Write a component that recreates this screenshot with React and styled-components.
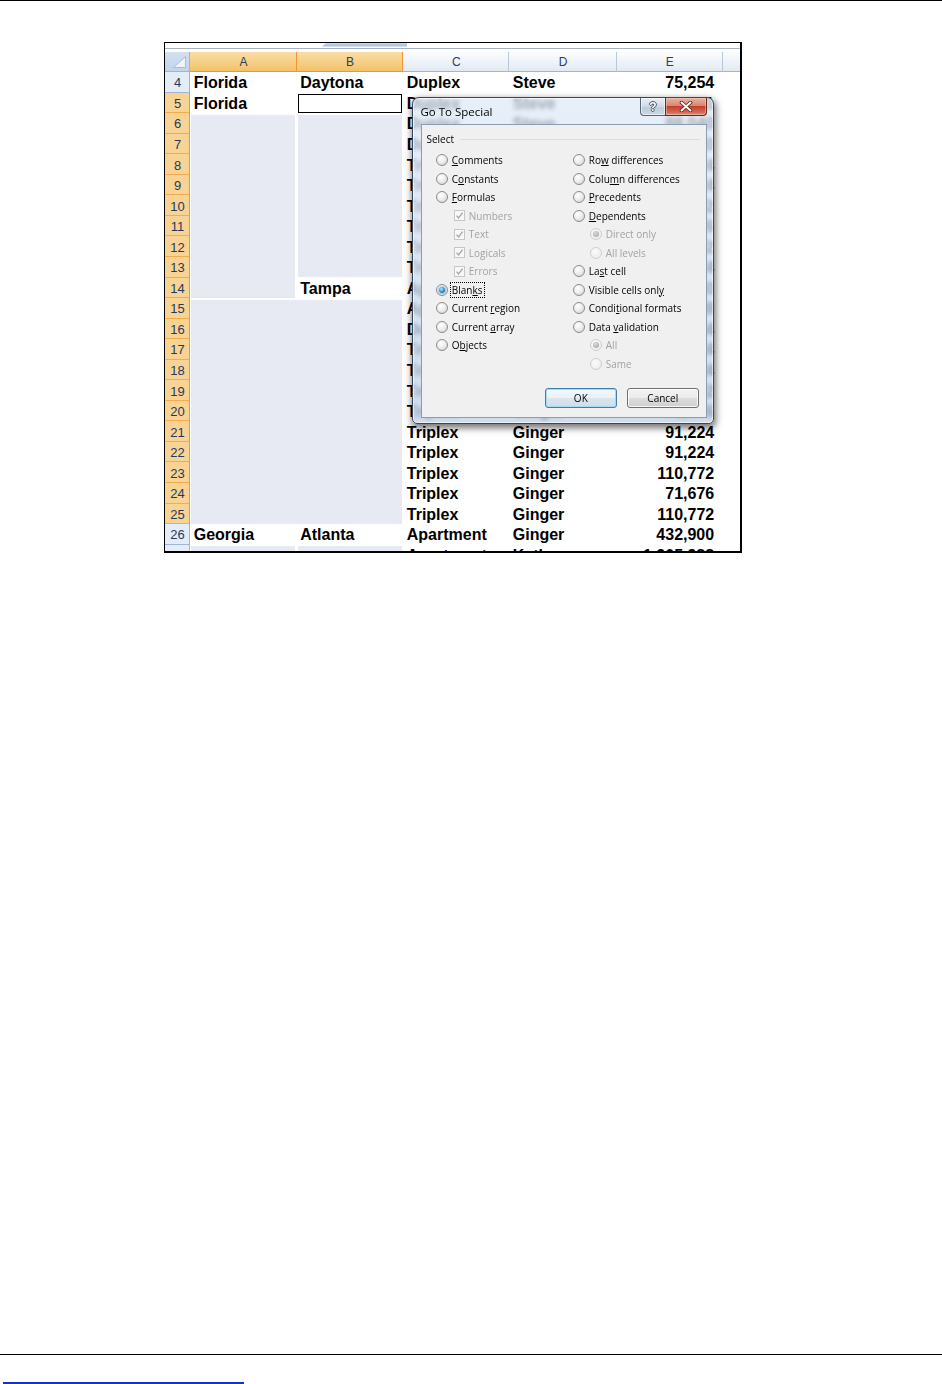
import React from 'react';
import styled, { createGlobalStyle } from 'styled-components';

const GlobalStyle = createGlobalStyle`
  html, body { margin: 0; padding: 0; background: #fff; }
  body { overflow: hidden; font-family: "Liberation Sans", Arial, sans-serif; }
`;

const Page = styled.div`
  height: 1384px;
  display: flex;
  flex-direction: column;
`;

const TopRule = styled.div`
  height: 1px;
  background: #000;
`;

const Figure = styled.div`
  margin: 41px 0 0 164px;
`;

const Sheet = styled.div`
  position: relative;
  width: 575.2px;
  height: 508px;
  border: 2px solid #000;
  border-top-width: 1px;
  border-left-width: 1.5px;
  overflow: hidden;
  background: #fff;
`;

const Strip = styled.div`
  height: 5px;
  border-bottom: 1px solid #a9b3bf;
  margin-bottom: 2.8px;
  padding-left: 157px;
`;

const StripTab = styled.div`
  width: 85px;
  height: 3.5px;
  background: linear-gradient(#c9d9ec, #9fb9d8);
  clip-path: polygon(4px 0, 100% 0, 100% 100%, 0 100%);
`;

const Grid = styled.div`
  display: grid;
  grid-template-columns: 25.2px 106.5px 106.6px 106px 107.4px 106px 18px;
  grid-template-rows: 20.3px repeat(24, 20.55px);
`;

const Corner = styled.div`
  grid-row: 1;
  grid-column: 1;
  background: linear-gradient(#d3e0f0, #c2d4ea);
  border-right: 1px solid #9eb6ce;
  border-bottom: 1px solid #9eb6ce;
  display: flex;
  align-items: flex-end;
  justify-content: flex-end;
  padding: 0 3px 3px 0;
  box-sizing: border-box;
`;

const ColHead = styled.div`
  grid-row: 1;
  grid-column: ${p => p.$col};
  box-sizing: border-box;
  display: flex;
  align-items: center;
  justify-content: center;
  padding: 1px 0 0 1px;
  font-size: 12px;
  color: #27415f;
  background: ${p => p.$sel
    ? 'linear-gradient(#f9dca6, #f6cf85 55%, #f2c26a)'
    : 'linear-gradient(#fbfcfe, #eef3f9 55%, #e2e9f3)'};
  border-right: 1px solid ${p => p.$sel ? '#f29536' : '#b7c8dc'};
  border-bottom: 1px solid ${p => p.$sel ? '#f29536' : '#9eb6ce'};
`;

const RowHead = styled.div`
  grid-column: 1;
  grid-row: ${p => p.$row};
  box-sizing: border-box;
  display: flex;
  align-items: center;
  justify-content: center;
  padding: 2px 0 0 1px;
  font-size: 13px;
  color: #1f3a5f;
  background: ${p => p.$sel ? '#f9d394' : '#e4ecf7'};
  border-right: 1px solid ${p => p.$sel ? '#f29536' : '#9eb6ce'};
  border-bottom: 1px solid ${p => p.$sel ? '#f4ab50' : '#9eb6ce'};
`;

const Shade = styled.div`
  grid-row: ${p => p.$row};
  grid-column: ${p => p.$col};
  margin: 1.7px 1.7px 0.3px 1px;
  background: #e7eaf3;
`;

const ActiveCell = styled.div`
  grid-row: 3;
  grid-column: 3;
  margin: 1.2px 1px 0.3px 1px;
  border: 1px solid #000;
`;

const Cell = styled.div`
  grid-row: ${p => p.$row};
  grid-column: ${p => p.$col};
  display: flex;
  align-items: center;
  justify-content: ${p => (p.$num ? 'flex-end' : 'flex-start')};
  padding: ${p => (p.$num ? '2px 8.5px 0 0' : '2px 0 0 3.5px')};
  font: bold 16px "Liberation Sans", Arial, sans-serif;
  color: #000;
  white-space: nowrap;
  z-index: 1;
`;

/* dialog */
const Dialog = styled.div`
  position: absolute;
  left: 246.5px;
  top: 54px;
  width: 302px;
  z-index: 5;
  box-sizing: border-box;
  border: 1px solid #34475c;
  border-radius: 7px 7px 5px 5px;
  padding: 0 6px 5px 8px;
  background: linear-gradient(rgba(222, 233, 246, 0.72), rgba(190, 209, 231, 0.74));
  backdrop-filter: blur(2.2px);
  box-shadow: inset 0 0 0 1px rgba(255, 255, 255, 0.6), 1px 3px 7px 1px rgba(0, 0, 0, 0.55);
  font-family: "Open Sans", "Noto Sans", sans-serif;
`;

const TitleBar = styled.div`
  height: 26px;
  display: flex;
  justify-content: space-between;
  align-items: flex-start;
`;

const Title = styled.div`
  align-self: center;
  font-size: 11.5px;
  color: #000;
  padding-top: 1px;
`;

const TitleButtons = styled.div`
  display: flex;
  margin-right: -0.5px;
`;

const HelpButton = styled.div`
  width: 25px;
  height: 18px;
  box-sizing: border-box;
  border: 1px solid #56687d;
  border-top: none;
  border-right: none;
  border-radius: 0 0 0 4px;
  background: linear-gradient(#e9eff6, #cfdae6 50%, #bccbdb 51%, #cbd7e4);
  box-shadow: inset 0 0 0 1px rgba(255, 255, 255, 0.55);
  display: flex;
  align-items: center;
  justify-content: center;
  font: bold 12px "Liberation Sans", Arial, sans-serif;
  color: #fff;
  text-shadow: -1px 0 #4b5b6d, 1px 0 #4b5b6d, 0 -1px #4b5b6d, 0 1px #4b5b6d;
`;

const CloseButton = styled.div`
  width: 42px;
  height: 18px;
  box-sizing: border-box;
  border: 1px solid #6b261c;
  border-top: none;
  border-radius: 0 0 4px 0;
  background: linear-gradient(#eab0a2, #d98672 45%, #c4402c 50%, #d36c56 85%, #e0947e);
  box-shadow: inset 0 0 0 1px rgba(255, 210, 200, 0.45);
  display: flex;
  align-items: center;
  justify-content: center;
`;

const Body = styled.div`
  background: #f0f0f0;
  border: 1px solid #8b9db4;
  padding: 7px 6px 8.7px 5px;
`;

const SectionHead = styled.div`
  height: 14px;
  display: flex;
  align-items: center;
  gap: 6px;
  font-size: 10px;
  color: #000;
  &::after {
    content: '';
    flex: 1;
    height: 1px;
    background: #d5dfe5;
  }
`;

const Options = styled.div`
  display: grid;
  grid-template-columns: 137px 1fr;
  grid-template-rows: repeat(12, 18.5px);
  grid-auto-flow: column;
  margin: 4.75px 0 0 9.3px;
`;

const Option = styled.div`
  display: flex;
  align-items: center;
  gap: 4px;
  padding-left: ${p => p.$indent}px;
  font-size: 10px;
  color: ${p => (p.$disabled ? '#a2a2a2' : '#000')};
  white-space: nowrap;
`;

const Radio = styled.span`
  flex: none;
  width: 12px;
  height: 12px;
  box-sizing: border-box;
  border-radius: 50%;
  border: 1px solid ${p => (p.$disabled ? '#cfcfcf' : '#8c8c8c')};
  background: ${p => p.$disabled
    ? 'radial-gradient(circle at 40% 35%, #fbfbfb, #e9e9e9)'
    : 'radial-gradient(circle at 38% 32%, #ffffff 0%, #ececec 50%, #c9c9c9 100%)'};
  display: flex;
  align-items: center;
  justify-content: center;
  &::after {
    content: '';
    display: ${p => (p.$checked ? 'block' : 'none')};
    width: 6px;
    height: 6px;
    border-radius: 50%;
    background: ${p => p.$disabled
      ? 'radial-gradient(circle at 40% 35%, #dcdcdc, #9c9c9c)'
      : 'radial-gradient(circle at 40% 35%, #b5ecff 0%, #2f93dc 50%, #0c4e92 100%)'};
    box-shadow: ${p => (p.$disabled ? 'none' : '0 0 0 1px rgba(60, 140, 210, 0.35)')};
  }
`;

const Check = styled.span`
  flex: none;
  width: 11px;
  height: 11px;
  box-sizing: border-box;
  border: 1px solid #c6c6c6;
  background: #f8f8f8;
  display: flex;
  align-items: center;
  justify-content: center;
`;

const Key = styled.span`
  text-decoration: underline;
  text-underline-offset: 1px;
`;

const Focus = styled.span`
  outline: 1px dotted #000;
  outline-offset: 0;
  padding: 0 1px;
  margin-left: -1px;
`;

const ButtonRow = styled.div`
  display: flex;
  justify-content: flex-end;
  gap: 10px;
  margin: 15.25px 0.7px 0 0;
`;

const Button = styled.div`
  width: 72px;
  height: 20px;
  box-sizing: border-box;
  border: 1px solid ${p => (p.$default ? '#3c7fb1' : '#707070')};
  border-radius: 3px;
  background: ${p => p.$default
    ? 'linear-gradient(#f3f8fb, #eaf1f6 50%, #d9e6ee 51%, #cfdde7)'
    : 'linear-gradient(#f2f2f2, #ebebeb 50%, #dddddd 51%, #cfcfcf)'};
  box-shadow: inset 0 0 0 1px ${p => (p.$default ? '#a6d9f4' : 'rgba(255,255,255,0.8)')};
  display: flex;
  align-items: center;
  justify-content: center;
  font-size: 10px;
  color: #000;
`;

const Footer = styled.div`
  margin-top: auto;
`;

const FooterRule = styled.div`
  height: 1px;
  background: #000;
`;

const FooterLink = styled.div`
  margin: 27px 0 0 3px;
  width: 241px;
  height: 2px;
  background: #0a35c6;
`;

const data = [
  ['Florida', 'Daytona', 'Duplex', 'Steve', '75,254'],
  ['Florida', '', 'Duplex', 'Steve', '77,101'],
  ['', '', 'Duplex', 'Steve', '88,040'],
  ['', '', 'Duplex', 'Steve', '88,040'],
  ['', '', 'Triplex', 'Steve', '91,224'],
  ['', '', 'Triplex', 'Steve', '91,224'],
  ['', '', 'Triplex', 'Steve', '110,772'],
  ['', '', 'Triplex', 'Steve', '71,676'],
  ['', '', 'Triplex', 'Steve', '110,772'],
  ['', '', 'Triplex', 'Steve', '91,224'],
  ['', 'Tampa', 'Apartment', 'Steve', '432,900'],
  ['', '', 'Apartment', 'Steve', '1,205,988'],
  ['', '', 'Duplex', 'Ginger', '75,254'],
  ['', '', 'Triplex', 'Ginger', '91,224'],
  ['', '', 'Triplex', 'Ginger', '91,224'],
  ['', '', 'Triplex', 'Ginger', '110,772'],
  ['', '', 'Triplex', 'Ginger', '71,676'],
  ['', '', 'Triplex', 'Ginger', '91,224'],
  ['', '', 'Triplex', 'Ginger', '91,224'],
  ['', '', 'Triplex', 'Ginger', '110,772'],
  ['', '', 'Triplex', 'Ginger', '71,676'],
  ['', '', 'Triplex', 'Ginger', '110,772'],
  ['Georgia', 'Atlanta', 'Apartment', 'Ginger', '432,900'],
  ['', '', 'Apartment', 'Kathy', '1,205,988'],
];

const shades = [
  { row: '4 / 13', col: '2' },
  { row: '4 / 12', col: '3' },
  { row: '13 / 24', col: '2 / 4' },
  { row: '25', col: '2' },
  { row: '25', col: '3' },
];

const leftOptions = [
  { text: 'Comments', key: 0 },
  { text: 'Constants', key: 1 },
  { text: 'Formulas', key: 0 },
  { text: 'Numbers', check: true, sub: true },
  { text: 'Text', check: true, sub: true },
  { text: 'Logicals', check: true, sub: true },
  { text: 'Errors', check: true, sub: true },
  { text: 'Blanks', key: 4, checked: true, focus: true },
  { text: 'Current region', key: 8 },
  { text: 'Current array', key: 8 },
  { text: 'Objects', key: 1 },
  null,
];

const rightOptions = [
  { text: 'Row differences', key: 2 },
  { text: 'Column differences', key: 4 },
  { text: 'Precedents', key: 0 },
  { text: 'Dependents', key: 0 },
  { text: 'Direct only', sub: true, checked: true },
  { text: 'All levels', sub: true },
  { text: 'Last cell', key: 2 },
  { text: 'Visible cells only', key: 17 },
  { text: 'Conditional formats', key: 5 },
  { text: 'Data validation', key: 5 },
  { text: 'All', sub: true, checked: true },
  { text: 'Same', sub: true },
];

const Label = ({ text, k }) =>
  k == null ? text : (
    <>
      {text.slice(0, k)}
      <Key>{text[k]}</Key>
      {text.slice(k + 1)}
    </>
  );

const OptionItem = ({ opt }) => {
  if (!opt) return <div />;
  const label = <Label text={opt.text} k={opt.key} />;
  return (
    <Option $indent={opt.sub ? (opt.check ? 18 : 17) : 0} $disabled={opt.sub}>
      {opt.check ? (
        <Check>
          <svg width="9" height="9" viewBox="0 0 9 9">
            <path d="M1.5 4.6 L3.6 7 L7.6 1.6" fill="none" stroke="#a9a9a9" strokeWidth="1.4" />
          </svg>
        </Check>
      ) : (
        <Radio $checked={opt.checked} $disabled={opt.sub} />
      )}
      {opt.focus ? <Focus>{label}</Focus> : <span>{label}</span>}
    </Option>
  );
};

const cols = ['A', 'B', 'C', 'D', 'E', ''];

const GoToSpecial = () => (
  <Dialog>
    <TitleBar>
      <Title>Go To Special</Title>
      <TitleButtons>
        <HelpButton>?</HelpButton>
        <CloseButton>
          <svg width="14" height="11" viewBox="0 0 14 11">
            <path d="M2.5 1.5 L11.5 9.5 M11.5 1.5 L2.5 9.5" stroke="#5b1c12" strokeWidth="3.6" strokeLinecap="round" />
            <path d="M2.5 1.5 L11.5 9.5 M11.5 1.5 L2.5 9.5" stroke="#fff" strokeWidth="2" strokeLinecap="round" />
          </svg>
        </CloseButton>
      </TitleButtons>
    </TitleBar>
    <Body>
      <SectionHead>Select</SectionHead>
      <Options>
        {leftOptions.map((o, i) => <OptionItem key={'l' + i} opt={o} />)}
        {rightOptions.map((o, i) => <OptionItem key={'r' + i} opt={o} />)}
      </Options>
      <ButtonRow>
        <Button $default>OK</Button>
        <Button>Cancel</Button>
      </ButtonRow>
    </Body>
  </Dialog>
);

export default function App() {
  return (
    <Page>
      <GlobalStyle />
      <TopRule />
      <Figure>
        <Sheet>
          <Strip>
            <StripTab />
          </Strip>
          <Grid>
            <Corner>
              <svg width="13" height="12" viewBox="0 0 13 12">
                <path d="M12.5 0.5 L12.5 11.5 L0.5 11.5 Z" fill="#eef3f9" stroke="#a7bdd6" />
              </svg>
            </Corner>
            {cols.map((c, i) => (
              <ColHead key={i} $col={i + 2} $sel={i < 2}>{c}</ColHead>
            ))}
            {data.map((_, i) => (
              <RowHead key={i} $row={i + 2} $sel={i > 0 && i < 22}>{i + 4}</RowHead>
            ))}
            {shades.map((s, i) => (
              <Shade key={i} $row={s.row} $col={s.col} />
            ))}
            <ActiveCell />
            {data.map((r, i) =>
              r.map((v, j) =>
                v ? (
                  <Cell key={i + '-' + j} $row={i + 2} $col={j + 2} $num={j === 4}>{v}</Cell>
                ) : null
              )
            )}
          </Grid>
          <GoToSpecial />
        </Sheet>
      </Figure>
      <Footer>
        <FooterRule />
        <FooterLink />
      </Footer>
    </Page>
  );
}
